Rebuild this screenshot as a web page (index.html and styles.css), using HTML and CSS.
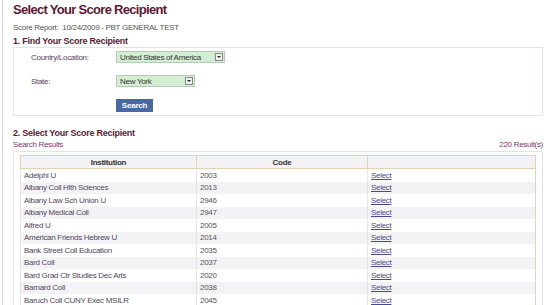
FILE: index.html
```html
<!DOCTYPE html>
<html lang="en">
<head>
    <meta charset="UTF-8">
    <title>Select Your Score Recipient</title>
    <link rel="stylesheet" href="styles.css">
</head>
<body>
<div class="page">
    <h1 class="title">Select Your Score Recipient</h1>
    <p class="report">Score Report:&nbsp; 10/24/2009 - PBT GENERAL TEST</p>

    <h2 class="step">1. Find Your Score Recipient</h2>
    <div class="box find">
        <div class="field">
            <label>Country/Location:</label>
            <div class="select wide"><span>United States of America</span><i class="arrow"></i></div>
        </div>
        <div class="field">
            <label>State:</label>
            <div class="select narrow"><span>New York</span><i class="arrow"></i></div>
        </div>
        <div class="field">
            <label></label>
            <button class="search">Search</button>
        </div>
    </div>

    <h2 class="step second">2. Select Your Score Recipient</h2>
    <div class="results-bar">
        <span>Search Results</span>
        <span>220 Result(s)</span>
    </div>
    <div class="box results">
        <table>
            <thead>
                <tr><th class="c1">Institution</th><th class="c2">Code</th><th class="c3"></th></tr>
            </thead>
            <tbody>
                <tr><td>Adelphi U</td><td>2003</td><td><a href="#">Select</a></td></tr>
                <tr><td>Albany Coll Hlth Sciences</td><td>2013</td><td><a href="#">Select</a></td></tr>
                <tr><td>Albany Law Sch Union U</td><td>2946</td><td><a href="#">Select</a></td></tr>
                <tr><td>Albany Medical Coll</td><td>2947</td><td><a href="#">Select</a></td></tr>
                <tr><td>Alfred U</td><td>2005</td><td><a href="#">Select</a></td></tr>
                <tr><td>American Friends Hebrew U</td><td>2014</td><td><a href="#">Select</a></td></tr>
                <tr><td>Bank Street Coll Education</td><td>2035</td><td><a href="#">Select</a></td></tr>
                <tr><td>Bard Coll</td><td>2037</td><td><a href="#">Select</a></td></tr>
                <tr><td>Bard Grad Ctr Studies Dec Arts</td><td>2020</td><td><a href="#">Select</a></td></tr>
                <tr><td>Barnard Coll</td><td>2038</td><td><a href="#">Select</a></td></tr>
                <tr><td>Baruch Coll CUNY Exec MSILR</td><td>2045</td><td><a href="#">Select</a></td></tr>
            </tbody>
        </table>
    </div>
</div>
</body>
</html>
```

FILE: styles.css
```css
body {
    margin: 0;
    background: #ffffff;
    font-family: "Liberation Sans", Arial, sans-serif;
    font-size: 8px;
    letter-spacing: -0.3px;
    color: #555555;
    overflow: hidden;
}
.page {
    border-left: 1px solid #d8d4d8;
    margin-left: 2px;
    padding: 0 11px 0 10px;
    height: 305px;
    overflow: hidden;
}
.title {
    margin: 0;
    padding-top: 2px;
    font-size: 13px;
    line-height: 15px;
    letter-spacing: -0.7px;
    color: #5a1a35;
}
.report {
    margin: 5px 0 0;
    font-size: 8px;
    line-height: 11px;
    color: #555555;
}
.step {
    margin: 3px 0 0;
    font-size: 9px;
    line-height: 11px;
    letter-spacing: -0.25px;
    color: #5a1a35;
}
.step.second {
    margin-top: 12px;
}
.box {
    border: 1px solid #e4e2e4;
    background: #ffffff;
}
.find {
    margin-top: 0;
    padding: 3px 0 3px 17px;
    height: 61px;
}
.field {
    display: flex;
    align-items: center;
    height: 12px;
    margin-bottom: 12px;
}
.field:last-child {
    margin-bottom: 0;
    height: 13px;
}
.field label {
    width: 85px;
    color: #5a4060;
}
.select {
    display: flex;
    align-items: center;
    justify-content: space-between;
    height: 10px;
    background: #d3efd3;
    border: 1px solid #b9c9b9;
    padding-left: 3px;
    color: #333333;
}
.select.wide { width: 104px; }
.select.narrow { width: 74px; }
.arrow {
    width: 8px;
    height: 8px;
    margin-right: 1px;
    background: #f0f0f0;
    border: 1px solid #888888;
    box-sizing: border-box;
    position: relative;
}
.arrow::after {
    content: "";
    position: absolute;
    left: 1px;
    top: 2px;
    border-left: 2px solid transparent;
    border-right: 2px solid transparent;
    border-top: 2px solid #222222;
}
.search {
    height: 13px;
    width: 37px;
    border: none;
    padding: 0;
    background: #4a67a0;
    color: #ffffff;
    font-family: "Liberation Sans", Arial, sans-serif;
    font-size: 8px;
    font-weight: bold;
    letter-spacing: -0.2px;
}
.results-bar {
    display: flex;
    justify-content: space-between;
    margin-top: 1px;
    line-height: 10px;
    color: #7a3a6a;
}
.results {
    margin-top: 1px;
    padding: 3px 6px 0 6px;
}
table {
    width: 100%;
    border-collapse: collapse;
    border: 1px solid #e3d3b5;
}
th {
    height: 12px;
    padding: 0;
    background: #f4f2f4;
    border: 1px solid #e3d3b5;
    color: #333333;
    font-weight: bold;
    font-size: 8px;
}
.c1 { width: 175px; }
.c2 { width: 170px; }
td {
    height: 12.5px;
    padding: 0 0 0 3px;
    border-left: 1px solid #e8e4e8;
    color: #555555;
    white-space: nowrap;
}
td:first-child {
    color: #54485e;
}
tbody tr:nth-child(even) td {
    background: #f3f2f5;
}
td a {
    color: #4a4a8a;
}
```
